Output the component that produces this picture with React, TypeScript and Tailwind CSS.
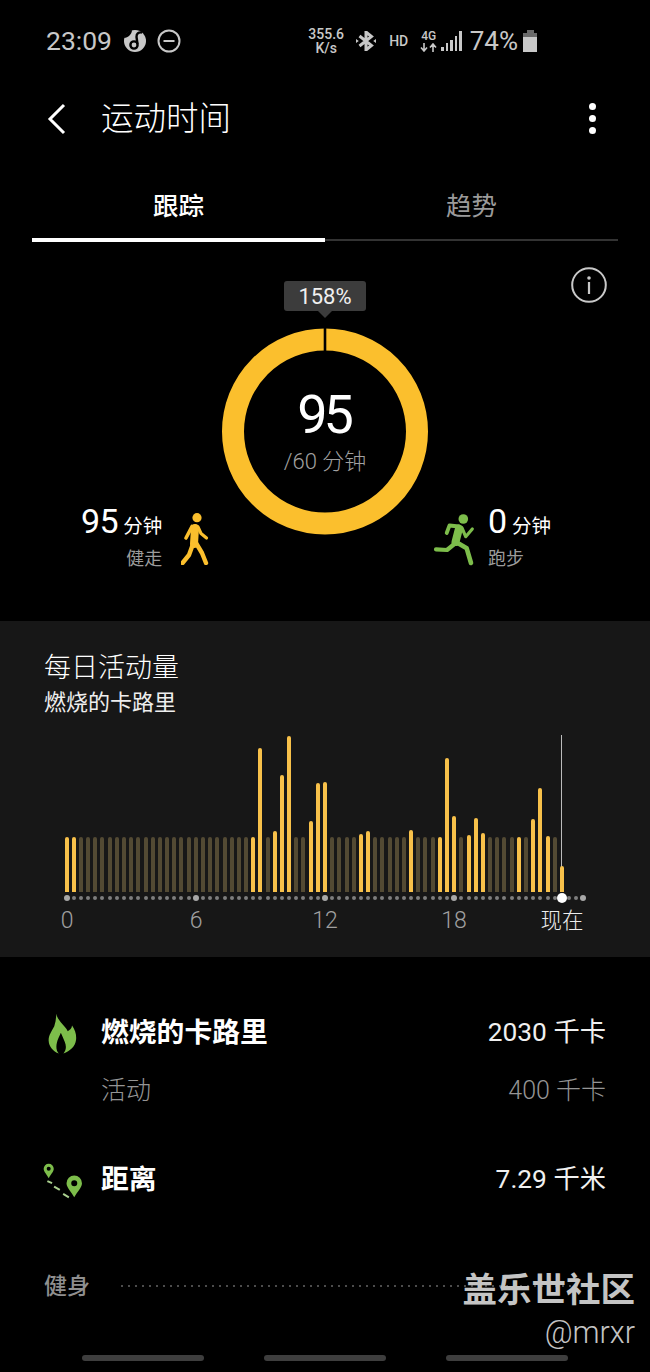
import React from "react";

const cjk = "font-['Roboto','Noto_Sans_CJK_SC',sans-serif]";

// active bars: slot index -> height in px, every other slot is a faded 55px bar
const active: Record<number, number> = {
  0: 55, 1: 55, 26: 55, 27: 144, 29: 61, 30: 117, 31: 156, 34: 71, 35: 109, 36: 110,
  41: 58, 42: 61, 48: 62, 52: 55, 53: 134, 54: 76, 56: 57, 57: 74, 58: 59,
  63: 55, 65: 73, 66: 104, 67: 56, 69: 26,
};
const slots = Array.from({ length: 73 }, (_, i) => i);
const trail = Array.from({ length: 70 }, (_, i) => i);

const Walker = () => (
  <svg width="28" height="52" viewBox="10 8 28 52" fill="none" stroke="#fbbf2d" strokeLinecap="round" strokeLinejoin="round" className="shrink-0">
    <circle cx="26" cy="12.700" r="4.600" fill="#fbbf2d" stroke="none" />
    <path d="M24 23L23 39" strokeWidth="8" />
    <path d="M21 21.500L15 33" strokeWidth="3.600" />
    <path d="M27 22L30 28.500L35.500 33" strokeWidth="3.200" />
    <path d="M22 39L18 50L11.500 58" strokeWidth="4.400" />
    <path d="M25 38L31 48L35 58" strokeWidth="4.400" />
  </svg>
);

const Runner = () => (
  <svg width="42" height="54" viewBox="8 8 42 54" fill="none" stroke="#7dbd4b" strokeLinecap="round" strokeLinejoin="round" className="shrink-0">
    <circle cx="38.300" cy="14" r="4.800" fill="#7dbd4b" stroke="none" />
    <path d="M34 23.500L30.500 37" strokeWidth="8" />
    <path d="M34 21.500L24.500 20.500L21.700 28" strokeWidth="3.800" />
    <path d="M37 23L40.700 31.700L47.300 24" strokeWidth="3.200" />
    <path d="M30 38.500L22 45L11 44.300" strokeWidth="4.200" />
    <path d="M31 37L41.700 43.300L46 58" strokeWidth="4.600" />
  </svg>
);

const Flame = () => (
  <svg width="29" height="41" viewBox="25 20 88 124" className="shrink-0">
    <path
      d="M50 22C55 45 75 55 85 75C90 72 97 68 98 58C108 72 112 88 110 102C108 122 92 135 72 143C82 130 80 118 76 108C72 98 68 90 64 80C60 90 54 100 52 110C49 122 50 134 58 143C40 136 28 122 27 104C26 88 36 76 44 60C48 48 50 35 50 22Z"
      fill="#7dbd4b"
    />
  </svg>
);

const Route = () => (
  <svg width="42" height="37" viewBox="25 15 125 110" className="shrink-0">
    <path fillRule="evenodd" d="M42 20a15 15 0 0 0-15 15c0 9 10 18 15 28c5-10 15-19 15-28a15 15 0 0 0-15-15zm0 9a6 6 0 1 1 0 12a6 6 0 0 1 0-12z" fill="#7dbd4b" />
    <path fillRule="evenodd" d="M118 55a23 23 0 0 0-23 23c0 13 15 26 23 42c8-16 23-29 23-42a23 23 0 0 0-23-23zm0 14a9 9 0 1 1 0 18a9 9 0 0 1 0-18z" fill="#7dbd4b" />
    <path d="M38 72L52 78M58 88L75 98M85 110L102 120" stroke="#a9cf8e" strokeWidth="6" fill="none" />
  </svg>
);

const Bluetooth = () => (
  <svg width="20" height="20" viewBox="0 0 20 20" fill="none" stroke="#c8c8c8" strokeWidth="3">
    <path d="M3.500 5L15.500 14.500L10 19V1L15.500 5.500L3.500 15" />
    <path d="M0 8L2.800 10L0 12ZM20 8L17.200 10L20 12Z" fill="#c8c8c8" stroke="none" />
  </svg>
);

const Row = ({ icon, label, value }: { icon: React.ReactNode; label: string; value: string }) => (
  <div className="flex items-center h-[40px]">
    <div className="w-[57px] flex justify-start">{icon}</div>
    <span className="text-[27.800px] font-bold text-white">{label}</span>
    <span className="ml-auto text-[26.300px] text-[#f0f0f0]">{value}</span>
  </div>
);

export default function App() {
  return (
    <div className={`relative w-[650px] h-[1372px] bg-black overflow-hidden text-white ${cjk}`}>
      {/* status bar */}
      <div className="h-[82px] flex items-center pl-[46px] pr-[113px] text-[#c8c8c8]">
        <span className="text-[26.500px] leading-none">23:09</span>
        <svg width="24" height="24" viewBox="0 0 24 24" fill="none" className="ml-[11px]">
          <circle cx="12" cy="12" r="11" fill="#c8c8c8" />
          <path d="M19 3.500C15 3 13.500 5 13.500 8L14.500 15" stroke="#000" strokeWidth="2.400" />
          <circle cx="11" cy="16" r="3.600" stroke="#000" strokeWidth="2.400" />
          <path d="M9 1C5 2 2 5 1 9C5 9 9 5 9 1Z" fill="#000" />
        </svg>
        <svg width="24" height="24" viewBox="0 0 24 24" fill="none" stroke="#c8c8c8" strokeWidth="2" className="ml-[10px]">
          <circle cx="12" cy="12" r="10.500" />
          <path d="M6.500 12h11" />
        </svg>
        <div className="ml-auto flex items-center">
          <div className="flex flex-col items-center text-[14px] leading-[14px] font-medium w-[38px]">
            <span>355.6</span>
            <span>K/s</span>
          </div>
          <div className="ml-[11px]"><Bluetooth /></div>
          <span className="ml-[13px] text-[14px] font-medium">HD</span>
          <div className="ml-[12px] flex flex-col items-center w-[17px]">
            <span className="text-[12px] leading-[12px] font-medium">4G</span>
            <svg width="17" height="9" viewBox="0 0 17 9" fill="none" stroke="#c8c8c8" strokeWidth="1.600" className="mt-[1px]">
              <path d="M4 0v7.500M1 4.500l3 3.500 3-3.500M13 9V1.500M10 4.500l3-3.500 3 3.500" />
            </svg>
          </div>
          <div className="ml-[4px] flex items-end gap-[2px] h-[20px]">
            <i className="w-[2.500px] h-[4px] bg-[#c8c8c8]" />
            <i className="w-[2.500px] h-[8px] bg-[#c8c8c8]" />
            <i className="w-[2.500px] h-[11px] bg-[#c8c8c8]" />
            <i className="w-[2.500px] h-[15px] bg-[#c8c8c8]" />
            <i className="w-[2.500px] h-[20px] bg-[#c8c8c8]" />
          </div>
          <span className="ml-[8px] text-[26px] leading-none">74%</span>
          <div className="ml-[5px] flex flex-col items-center">
            <i className="w-[7px] h-[3px] bg-[#6a6a6a]" />
            <div className="w-[14px] h-[19px] bg-[#c8c8c8] border-t-[4px] border-[#6a6a6a]" />
          </div>
        </div>
      </div>

      {/* header */}
      <div className="h-[73px] flex items-center pl-[47px] pr-[54px]">
        <svg width="20" height="32" viewBox="0 0 20 32" fill="none" stroke="white" strokeWidth="3">
          <path d="M17 2L3 16l14 14" />
        </svg>
        <span className="ml-[34px] mt-[2px] text-[32.500px] font-light leading-none">运动时间</span>
        <div className="ml-auto flex flex-col gap-[5px]">
          <i className="w-[7px] h-[7px] rounded-full bg-white" />
          <i className="w-[7px] h-[7px] rounded-full bg-white" />
          <i className="w-[7px] h-[7px] rounded-full bg-white" />
        </div>
      </div>

      {/* tabs */}
      <div className="mx-[32px] mt-[9px] grid grid-cols-2 h-[78px]">
        <div className="flex flex-col">
          <span className="flex-1 flex items-center justify-center pt-[10px] text-[25.500px] font-medium">跟踪</span>
          <i className="h-[4px] bg-white" />
        </div>
        <div className="flex flex-col">
          <span className="flex-1 flex items-center justify-center pt-[10px] text-[25.500px] text-[#9a9a9a]">趋势</span>
          <i className="h-[2px] my-[1px] bg-[#333]" />
        </div>
      </div>

      {/* goal ring */}
      <div className="relative h-[379px]">
        <svg width="36" height="36" viewBox="0 0 36 36" fill="none" className="absolute left-[571px] top-[25px]">
          <circle cx="18" cy="18" r="16.800" stroke="#c8c8c8" strokeWidth="2" />
          <circle cx="18" cy="11" r="1.800" fill="#c8c8c8" />
          <rect x="16.900" y="15" width="2.200" height="12" fill="#c8c8c8" />
        </svg>

        <div className="flex flex-col items-center pt-[39px]">
          <div className="w-[82px] h-[30px] pt-[1px] rounded-[3px] bg-[#3c3c3c] flex items-center justify-center text-[22px] text-[#f0f0f0]">
            158%
          </div>
          <i className="w-0 h-0 border-x-[7px] border-x-transparent border-t-[7px] border-t-[#3c3c3c]" />
          <div className="relative mt-[10px] w-[206px] h-[207px]">
            <svg width="206" height="207" viewBox="0 0 206 207">
              <circle cx="103" cy="103.500" r="92" fill="none" stroke="#fbbf2d" strokeWidth="22" />
              <rect x="101.700" y="0" width="2.600" height="24" fill="#000" />
            </svg>
            <div className="absolute inset-0 flex flex-col items-center">
              <span className="mt-[60px] -ml-[3px] text-[54px] leading-none tracking-[-4px]">95</span>
              <span className="mt-[9px] text-[22px] leading-none font-light text-[#a0a0a0]">/60 分钟</span>
            </div>
          </div>
        </div>

        <div className="absolute left-[81px] top-[260px] flex items-start">
          <div className="flex flex-col items-end">
            <div className="flex items-baseline">
              <span className="text-[34px] leading-[38px] tracking-[-0.500px]">95</span>
              <span className="ml-[5px] text-[19.500px] leading-none">分钟</span>
            </div>
            <span className="text-[18px] leading-[24px] mt-[7px] text-[#9c9c9c]">健走</span>
          </div>
          <div className="ml-[19px] mt-[11px]"><Walker /></div>
        </div>
        <div className="absolute left-[433px] top-[260px] flex items-start">
          <div className="mt-[11px]"><Runner /></div>
          <div className="ml-[13px] flex flex-col items-start">
            <div className="flex items-baseline">
              <span className="text-[34px] leading-[38px]">0</span>
              <span className="ml-[5px] text-[19.500px] leading-none">分钟</span>
            </div>
            <span className="text-[18px] leading-[24px] mt-[7px] text-[#9c9c9c]">跑步</span>
          </div>
        </div>
      </div>

      {/* daily activity */}
      <div className="h-[336px] bg-[#171717] pt-[30px]">
        <div className="pl-[44px] text-[27px] leading-[34px] font-light">每日活动量</div>
        <div className="pl-[44px] mt-[3px] text-[22px] leading-[30px] text-[#eeeeee]">燃烧的卡路里</div>

        <div className="relative ml-[63px] w-[524px] mt-[17px]">
          <div className="grid grid-cols-[repeat(73,minmax(0,1fr))] items-end h-[157px]">
            {slots.map((i) =>
              i >= 70 ? (
                <div key={i} />
              ) : (
                <div key={i} className="flex justify-center relative">
                  {i === 69 && <i className="absolute bottom-0 w-px h-[157px] bg-[#bbb]" />}
                  <i
                    className={`relative w-[4px] rounded-t-full ${active[i] ? "bg-[#f8c14a]" : "bg-[#534a33]"}`}
                    style={{ height: active[i] ?? 55 }}
                  />
                </div>
              )
            )}
          </div>
          <div className="grid grid-cols-[repeat(73,minmax(0,1fr))] items-center h-[12px]">
            {slots.map((i) => (
              <div key={i} className="flex justify-center">
                {i === 69 ? (
                  <i className="w-[10px] h-[10px] shrink-0 rounded-full bg-white" />
                ) : (
                  <i className={`rounded-full shrink-0 ${i % 18 === 0 ? "w-[6px] h-[6px] bg-[#a8a8a8]" : "w-[4px] h-[4px] bg-[#7e7e7e]"}`} />
                )}
              </div>
            ))}
          </div>
        </div>

        <div className="flex pl-[67px] mt-[1px] text-[23px] leading-[32px] font-light text-[#a0a0a0]">
          <div className="w-[129px]"><div className="w-0 flex justify-center">0</div></div>
          <div className="w-[129px]"><div className="w-0 flex justify-center">6</div></div>
          <div className="w-[129px]"><div className="w-0 flex justify-center">12</div></div>
          <div className="w-[108px]"><div className="w-0 flex justify-center">18</div></div>
          <div className="w-0 flex justify-center whitespace-nowrap text-[21.500px] text-[#eeeeee]">现在</div>
        </div>
      </div>

      {/* details */}
      <div className="px-[44px] pt-[56px]">
        <Row icon={<div className="ml-[4px]"><Flame /></div>} label="燃烧的卡路里" value="2030 千卡" />
        <div className="flex items-center h-[40px] mt-[18px] pl-[57px] text-[25px] font-light text-[#959595]">
          <span>活动</span>
          <span className="ml-auto">400 千卡</span>
        </div>
        <div className="mt-[49px]">
          <Row icon={<div className="-ml-[1px]"><Route /></div>} label="距离" value="7.29 千米" />
        </div>
        <div className="flex items-center mt-[71px] h-[32px]">
          <span className="text-[23px] font-medium text-[#8f8f8f]">健身</span>
          <div className="ml-[31px] -mt-[3px] flex-1 flex justify-between">
            {trail.map((i) => (
              <i key={i} className="w-[2px] h-[2px] rounded-full bg-[#666]" />
            ))}
          </div>
        </div>
      </div>

      {/* watermark */}
      <div className="absolute right-[15px] top-[1267px] flex flex-col items-end text-[#c4c4c4]">
        <span className="text-[34.500px] leading-[46px] font-bold">盖乐世社区</span>
        <span className="text-[30.500px] leading-[36px] font-light mt-[2px]">@mrxr</span>
      </div>

      {/* nav pills */}
      <div className="absolute bottom-[11px] left-0 right-0 flex justify-center gap-[60px]">
        <i className="w-[122px] h-[6px] rounded-full bg-[#3e3e3e]" />
        <i className="w-[122px] h-[6px] rounded-full bg-[#3e3e3e]" />
        <i className="w-[122px] h-[6px] rounded-full bg-[#3e3e3e]" />
      </div>
    </div>
  );
}
